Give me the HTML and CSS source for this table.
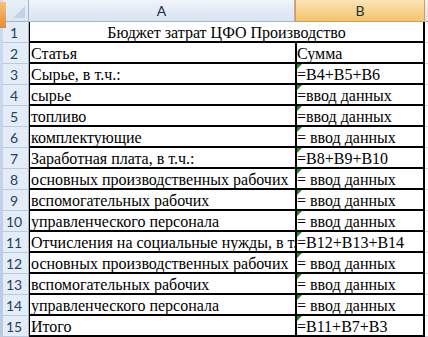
FILE: index.html
```html
<!DOCTYPE html>
<html lang="ru">
<head>
<meta charset="utf-8">
<title>Бюджет затрат ЦФО Производство</title>
<link rel="stylesheet" href="styles.css">
</head>
<body>
<div class="sheet">
  <div class="corner"><span class="corner-tri"></span></div>
  <div class="colh">A</div>
  <div class="colh sel">B</div>
  <div class="colh rest"></div>

  <div class="rowh">1</div>
  <div class="cell title">Бюджет затрат ЦФО Производство</div>
  <div class="grid"></div>

  <div class="rowh">2</div>
  <div class="cell a">Статья</div>
  <div class="cell b">Сумма</div>
  <div class="grid"></div>

  <div class="rowh">3</div>
  <div class="cell a">Сырье, в т.ч.:</div>
  <div class="cell b tri">=B4+B5+B6</div>
  <div class="grid"></div>

  <div class="rowh">4</div>
  <div class="cell a">сырье</div>
  <div class="cell b tri">=ввод данных</div>
  <div class="grid"></div>

  <div class="rowh">5</div>
  <div class="cell a">топливо</div>
  <div class="cell b tri">=ввод данных</div>
  <div class="grid"></div>

  <div class="rowh">6</div>
  <div class="cell a">комплектующие</div>
  <div class="cell b tri">= ввод данных</div>
  <div class="grid"></div>

  <div class="rowh">7</div>
  <div class="cell a">Заработная плата, в т.ч.:</div>
  <div class="cell b tri">=B8+B9+B10</div>
  <div class="grid"></div>

  <div class="rowh">8</div>
  <div class="cell a">основных производственных рабочих</div>
  <div class="cell b tri">= ввод данных</div>
  <div class="grid"></div>

  <div class="rowh">9</div>
  <div class="cell a">вспомогательных рабочих</div>
  <div class="cell b tri">= ввод данных</div>
  <div class="grid"></div>

  <div class="rowh">10</div>
  <div class="cell a">управленческого персонала</div>
  <div class="cell b tri">= ввод данных</div>
  <div class="grid"></div>

  <div class="rowh">11</div>
  <div class="cell a">Отчисления на социальные нужды, в т.ч.:</div>
  <div class="cell b tri">=B12+B13+B14</div>
  <div class="grid"></div>

  <div class="rowh">12</div>
  <div class="cell a">основных производственных рабочих</div>
  <div class="cell b tri">= ввод данных</div>
  <div class="grid"></div>

  <div class="rowh">13</div>
  <div class="cell a">вспомогательных рабочих</div>
  <div class="cell b tri">= ввод данных</div>
  <div class="grid"></div>

  <div class="rowh">14</div>
  <div class="cell a">управленческого персонала</div>
  <div class="cell b tri">= ввод данных</div>
  <div class="grid"></div>

  <div class="rowh">15</div>
  <div class="cell a">Итого</div>
  <div class="cell b tri">=B11+B7+B3</div>
  <div class="grid"></div>

  <div class="behind">
    <div class="behind-btn"></div>
  </div>
</div>
</body>
</html>
```

FILE: styles.css
```css
html, body {
  margin: 0;
  padding: 0;
  background: #ffffff;
}

.sheet {
  position: relative;
  width: 428px;
  height: 337px;
  overflow: hidden;
  display: grid;
  grid-template-columns: 29px 266px 130px 3px;
  grid-template-rows: 22px repeat(15, 21px);
  font-family: "Liberation Serif", "Times New Roman", serif;
  font-size: 16px;
  color: #000;
}

.corner {
  position: relative;
  box-sizing: border-box;
  background: linear-gradient(#e9eff8, #dce6f3);
  border-right: 1px solid #9eb6ce;
  border-bottom: 1px solid #9eb6ce;
}

.corner-tri {
  position: absolute;
  right: 3px;
  bottom: 3px;
  width: 0;
  height: 0;
  border-left: 12px solid transparent;
  border-bottom: 12px solid #c3d1e2;
}

.colh {
  box-sizing: border-box;
  background: linear-gradient(#f1f5fb 0%, #e4ecf7 45%, #dae4f1 100%);
  border-right: 1px solid #9eb6ce;
  border-bottom: 1px solid #9eb6ce;
  font-family: "Lato", "Liberation Sans", sans-serif;
  font-size: 14px;
  color: #1f2f44;
  display: flex;
  align-items: center;
  justify-content: center;
}

.colh.sel {
  background: linear-gradient(#fbe4b8 0%, #f8d594 45%, #f4c66f 100%);
  border-left: 1px solid #f29536;
  border-right: 1px solid #f29536;
  border-bottom: 1px solid #f29536;
}

.colh.rest {
  border-right: none;
}

.rowh {
  box-sizing: border-box;
  background: #e4ecf7;
  border-right: 1px solid #9eb6ce;
  border-bottom: 1px solid #b9cbe0;
  font-family: "Lato", "Liberation Sans", sans-serif;
  font-size: 14px;
  color: #27415f;
  display: flex;
  align-items: center;
  justify-content: center;
}

.cell {
  position: relative;
  box-sizing: border-box;
  height: 21px;
  line-height: 21px;
  white-space: nowrap;
  overflow-x: clip;
  overflow-y: visible;
  border-bottom: 2px solid #000;
}

.cell.title {
  grid-column: span 2;
  text-align: center;
  border-left: 1px solid #000;
  border-right: 2px solid #000;
}

.cell.a {
  padding-left: 1px;
  border-left: 1px solid #000;
}

.cell.b {
  padding-left: 0;
  border-left: 2px solid #000;
  border-right: 2px solid #000;
}

.cell.tri::before {
  content: "";
  position: absolute;
  top: 0;
  left: 0;
  width: 0;
  height: 0;
  border-top: 5px solid #1a8a1a;
  border-right: 5px solid transparent;
}

.grid {
  box-sizing: border-box;
  border-bottom: 1px solid #d0d7e5;
}

.behind {
  position: absolute;
  left: 0;
  top: 0;
  width: 3px;
  height: 337px;
  background: linear-gradient(#cfdcee, #b8cbe3);
}

.behind-btn {
  width: 6px;
  height: 26px;
  margin-top: 2px;
  background: linear-gradient(#f7c27b, #e98a2f);
}
```
